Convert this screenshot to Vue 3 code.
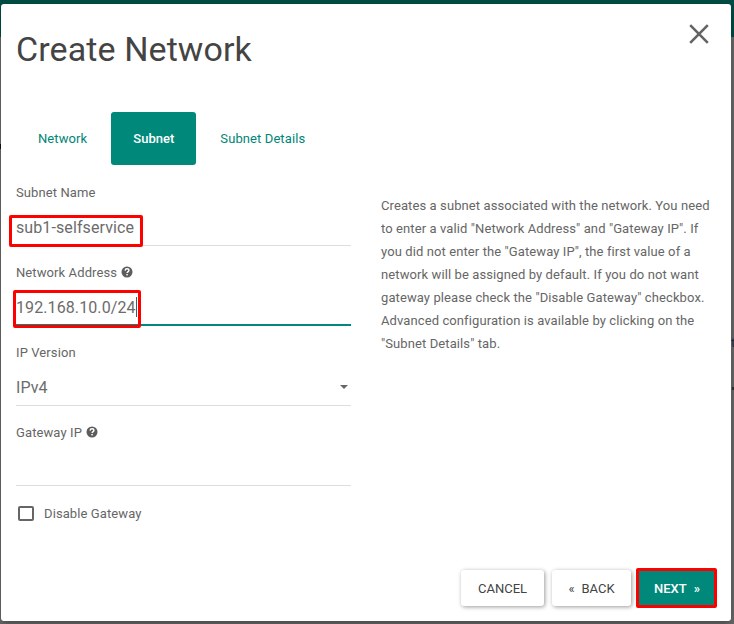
<script setup>
import { ref } from 'vue'

const tabs = ['Network', 'Subnet', 'Subnet Details']
const active = ref('Subnet')
</script>

<template>
  <div class="page">
    <div class="topbar"></div>
    <span class="peek peek-t">t</span>
    <span class="peek peek-caret"></span>
    <span class="peek peek-left"></span>
    <section class="modal">
      <header class="head">
        <h3>Create Network</h3>
        <svg class="close" width="20" height="20" viewBox="0 0 20 20">
          <path d="M1.2 1.2 18.8 18.8M18.8 1.2 1.2 18.8" fill="none" stroke="#646464" stroke-width="2.6" />
        </svg>
      </header>
      <nav class="tabs">
        <a v-for="t in tabs" :key="t" class="tab" :class="{ active: t === active }" @click="active = t">{{ t }}</a>
      </nav>
      <div class="body">
        <div class="form">
          <div class="field">
            <label>Subnet Name</label>
            <div class="control"><span class="up">sub1-selfservice</span><i class="mark mark-name"></i></div>
          </div>
          <div class="field">
            <label>Network Address
              <svg class="help" width="12" height="12" viewBox="0 0 12 12">
                <circle cx="6" cy="6" r="5.5" fill="#5c5c5c" />
                <path d="M4.1 4.6C4.2 3.2 5 2.8 6 2.8s1.9.6 1.9 1.6c0 1.2-1.8 1.3-1.8 2.7" fill="none" stroke="#fff" stroke-width="1.4" />
                <rect x="5.3" y="8" width="1.5" height="1.4" fill="#fff" />
              </svg>
            </label>
            <div class="control focused"><span>192.168.10.0/24</span><i class="cursor"></i><i class="mark mark-address"></i></div>
          </div>
          <div class="field">
            <label>IP Version</label>
            <div class="control select"><span>IPv4</span>
              <svg class="arrow" width="8" height="4" viewBox="0 0 8 4"><path d="M0 0h8L4 4z" fill="#666" /></svg>
            </div>
          </div>
          <div class="field">
            <label>Gateway IP
              <svg class="help" width="12" height="12" viewBox="0 0 12 12">
                <circle cx="6" cy="6" r="5.5" fill="#5c5c5c" />
                <path d="M4.1 4.6C4.2 3.2 5 2.8 6 2.8s1.9.6 1.9 1.6c0 1.2-1.8 1.3-1.8 2.7" fill="none" stroke="#fff" stroke-width="1.4" />
                <rect x="5.3" y="8" width="1.5" height="1.4" fill="#fff" />
              </svg>
            </label>
            <div class="control"></div>
          </div>
          <div class="check"><span class="box"></span><span>Disable Gateway</span></div>
        </div>
        <p class="info">
          Creates a subnet associated with the network. You need<br>
          to enter a valid "Network Address" and "Gateway IP". If<br>
          you did not enter the "Gateway IP", the first value of a<br>
          network will be assigned by default. If you do not want<br>
          gateway please check the "Disable Gateway" checkbox.<br>
          Advanced configuration is available by clicking on the<br>
          "Subnet Details" tab.
        </p>
      </div>
      <footer class="foot">
        <button class="btn cancel">CANCEL</button>
        <button class="btn back"><span>«</span><span>BACK</span></button>
        <button class="btn next"><span>NEXT</span><span>»</span></button>
      </footer>
    </section>
  </div>
</template>

<style>
body { margin: 0; }
</style>

<style scoped>
.page {
  position: relative;
  box-sizing: border-box;
  width: 734px;
  height: 624px;
  padding: 4px 3px 3px 1px;
  overflow: hidden;
  background: #6a6a6a;
  font: 13px/23px Roboto, sans-serif;
  letter-spacing: 0.1px;
  color: #666;
}
.topbar { position: absolute; inset: 0 0 auto; height: 37px; background: #004d44; }
.peek { position: absolute; }
.peek-t { left: 731px; top: 331px; color: #1d2b46; }
.peek-caret { left: 732px; top: 387px; width: 2px; height: 3px; background: #333; }
.peek-left { left: 0; top: 144px; width: 1px; height: 5px; background: #111; }
.modal {
  position: relative;
  box-sizing: border-box;
  display: flex;
  flex-direction: column;
  height: 617px;
  padding: 0 15px;
  border-radius: 3px;
  background: #fff;
  box-shadow: 0 4px 10px rgba(0, 0, 0, 0.3);
}
.head { display: flex; justify-content: space-between; height: 108px; }
h3 { margin: 25px 0 0; font-size: 34px; line-height: 40px; font-weight: 400; letter-spacing: 0.1px; color: #444; }
.close { margin: 20px 7px 0 0; }
.tabs { display: flex; gap: 2px; height: 53px; }
.tab { padding: 0 22px; line-height: 53px; border-radius: 3px; color: #008577; }
.tab.active { box-sizing: border-box; width: 85px; background: #00897b; color: #fff; font-weight: 500; letter-spacing: 0; }
.body { display: flex; gap: 30px; height: 403px; }
.form { width: 335px; padding-top: 16px; }
.field { height: 80px; }
.field label { display: flex; align-items: center; gap: 4px; height: 23px; }
.help { margin-top: -1px; }
.control {
  position: relative;
  box-sizing: border-box;
  display: flex;
  align-items: center;
  height: 42px;
  border-bottom: 1px solid #ddd;
  font-size: 16px;
  letter-spacing: 0.1px;
}
.control.focused { border-bottom: 2px solid #00897b; }
.control > span { color: #6c6c6c; }
.up { margin-top: 6px; }
.control.focused span { margin-top: 6px; }
.cursor { width: 1px; height: 20px; margin-top: 6px; background: #555; }
.mark { position: absolute; box-sizing: border-box; border: 3px solid #f00; border-radius: 2px; }
.mark-name { left: -7px; top: 11px; width: 134px; height: 32px; }
.mark-address { left: -3px; top: 6px; width: 128px; height: 38px; }
.select { justify-content: space-between; padding-right: 3px; }
.select span { margin-top: 5px; }
.arrow { margin-top: 4px; }
.check { display: flex; align-items: center; gap: 10px; height: 23px; padding: 1px 0 0 2px; }
.box { box-sizing: border-box; width: 16px; height: 15px; border: 2px solid #666; border-radius: 2px; }
.info { margin: 29px 0 0; white-space: nowrap; }
.foot { display: flex; height: 40px; padding-left: 445px; align-items: center; }
.btn {
  box-sizing: border-box;
  display: flex;
  flex-shrink: 0;
  justify-content: center;
  align-items: center;
  height: 36px;
  padding: 0;
  border: 0;
  border-radius: 3px;
  background: #fff;
  font: 13px/23px Roboto, sans-serif;
  letter-spacing: 0;
  color: #444;
  box-shadow: 1px 1px 4px rgba(0, 0, 0, 0.4);
}
.cancel { width: 83px; }
.back { width: 79px; margin-left: 8px; gap: 7px; }
.next { width: 81px; height: 40px; margin-left: 5px; gap: 7px; padding-left: 1px; border: 3px solid #f00; border-radius: 2px; background: #00897b; color: #fff; font-weight: 500; box-shadow: none; }
</style>
